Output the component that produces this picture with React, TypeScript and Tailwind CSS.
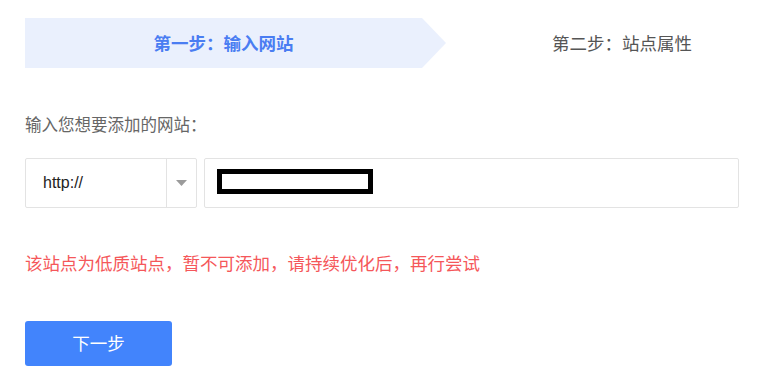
export default function App() {
  const cjk = { fontFamily: '"Microsoft YaHei", "Noto Sans CJK SC", sans-serif' };
  return (
    <div className="w-[759px] h-[389px] overflow-hidden bg-white pl-[25px] pt-[18px]" style={cjk}>
      {/* steps */}
      <div className="flex h-[50px] w-[800px]">
        <div className="w-[397px] h-full bg-[#eaf0fd] flex items-center justify-center text-[17.5px] font-bold text-[#4a7df2]">
          第一步：输入网站
        </div>
        <svg width="24" height="50" viewBox="0 0 24 50" className="shrink-0">
          <polygon points="0,0 24,25 0,50" fill="#eaf0fd" />
        </svg>
        <div className="w-[352px] h-full flex items-center justify-center text-[17.5px] text-[#555]">
          第二步：站点属性
        </div>
      </div>

      <p className="mt-[44px] text-[16.5px] leading-[24px] text-[#666]">输入您想要添加的网站：</p>

      {/* url row */}
      <div className="mt-[22px] flex gap-[7px] h-[50px] w-[714px]">
        <div className="w-[172px] h-full flex border border-[#e3e3e3] rounded-[2px]">
          <div
            className="flex-1 flex items-center pl-[17px] text-[16px] text-[#222]"
            style={{ fontFamily: '"Liberation Sans", Arial, sans-serif' }}
          >
            http://
          </div>
          <div className="w-[30px] border-l border-[#e3e3e3] flex items-center justify-center">
            <svg width="11" height="6" viewBox="0 0 11 6">
              <polygon points="0,0 11,0 5.5,6" fill="#9b9b9b" />
            </svg>
          </div>
        </div>
        <div className="flex-1 h-full border border-[#e3e3e3] rounded-[2px] pl-[12px] pt-[10px]">
          <div className="w-[156px] h-[25px] border-[5px] border-black bg-white" />
        </div>
      </div>

      <p className="mt-[43px] text-[17.5px] leading-[24px] text-[#f5575a]">
        该站点为低质站点，暂不可添加，请持续优化后，再行尝试
      </p>

      <button className="mt-[46px] w-[147px] h-[45px] rounded-[3px] bg-[#4284fc] text-white text-[17.5px] flex items-center justify-center">
        下一步
      </button>
    </div>
  );
}
